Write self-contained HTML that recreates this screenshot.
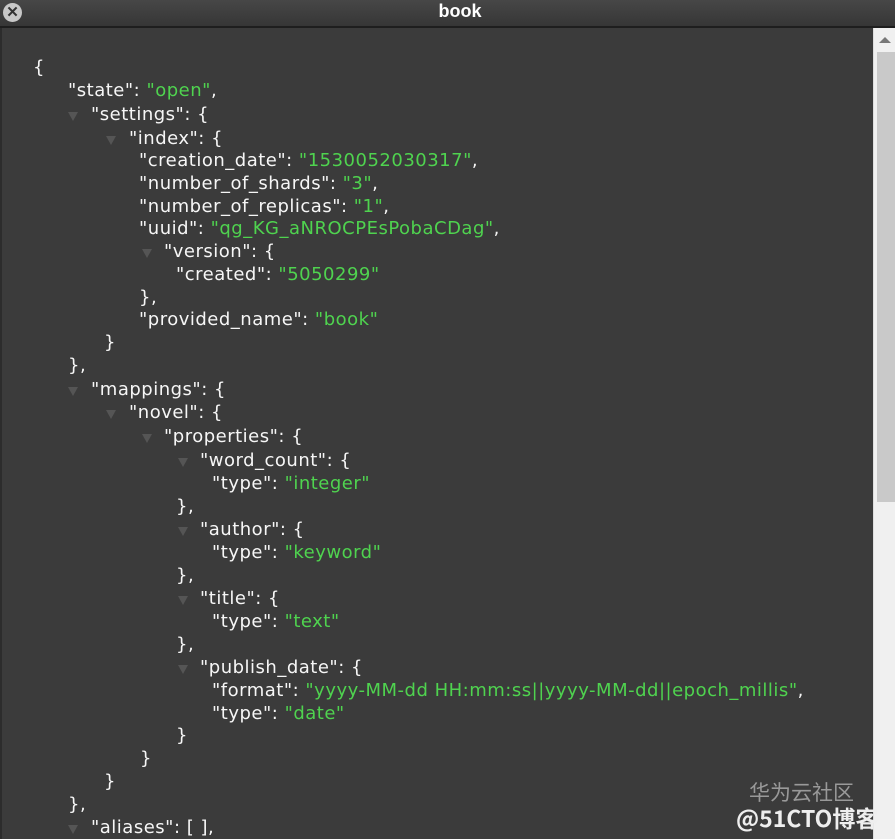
<!DOCTYPE html>
<html><head><meta charset="utf-8"><style>
body{margin:0;width:895px;height:839px;overflow:hidden;background:#3a3a3a;position:relative;font-family:"DejaVu Sans",Verdana,sans-serif}
.tb{position:absolute;left:0;top:0;width:895px;height:26px;background:linear-gradient(#474747,#363636);border-bottom:2px solid #1e1e1e}
.tt{position:absolute;left:0;width:920px;top:1px;text-align:center;color:#fff;font-weight:bold;font-size:18px;font-family:"Liberation Sans",sans-serif}
.cl{position:absolute;left:3px;top:3px;width:19px;height:19px;border-radius:50%;background:#c8c8c8;color:#333;font-size:15px;font-weight:bold;text-align:center;line-height:19px;font-family:"Liberation Sans",sans-serif}
.c{position:absolute;left:0;top:28px;width:873px;height:811px;background:#3b3b3b;border-left:2px solid #2c2c2c}
.l{position:absolute;color:#f6f6f6;font-size:18px;line-height:22px;white-space:pre;letter-spacing:0.5px}
.s{color:#4fd34f}
.t{position:absolute;width:0;height:0;border-left:5px solid transparent;border-right:5px solid transparent;border-top:9px solid #555}
.sb{position:absolute;left:873px;top:28px;width:22px;height:811px;background:#f0f0f0;border-left:1px solid #ddd}
.th{position:absolute;left:877px;top:52px;width:18px;height:450px;background:#c9c9c9}
.ar{position:absolute;left:879px;top:37px;width:0;height:0;border-left:6px solid transparent;border-right:6px solid transparent;border-bottom:6px solid #777}
.wm{position:absolute;color:#bbb;font-family:"Noto Sans CJK SC",sans-serif}
</style></head><body>
<div class="tb"><div class="cl">✕</div><div class="tt">book</div></div>
<div class="c"></div>
<div class="sb"></div><div class="th"></div><div class="ar"></div>

<div class="l" style="left:33px;top:57px">{</div>
<div class="l" style="left:68px;top:80px">"state": <span class="s">"open"</span>,</div>
<div class="t" style="left:68px;top:112px"></div><div class="l" style="left:91px;top:104px">"settings": {</div>
<div class="t" style="left:106px;top:136px"></div><div class="l" style="left:129px;top:128px">"index": {</div>
<div class="l" style="left:139px;top:150px">"creation_date": <span class="s">"1530052030317"</span>,</div>
<div class="l" style="left:139px;top:173px">"number_of_shards": <span class="s">"3"</span>,</div>
<div class="l" style="left:139px;top:196px">"number_of_replicas": <span class="s">"1"</span>,</div>
<div class="l" style="left:139px;top:218px">"uuid": <span class="s">"qg_KG_aNROCPEsPobaCDag"</span>,</div>
<div class="t" style="left:142px;top:249px"></div><div class="l" style="left:164px;top:241px">"version": {</div>
<div class="l" style="left:176px;top:264px">"created": <span class="s">"5050299"</span></div>
<div class="l" style="left:139px;top:287px">},</div>
<div class="l" style="left:139px;top:309px">"provided_name": <span class="s">"book"</span></div>
<div class="l" style="left:104px;top:332px">}</div>
<div class="l" style="left:68px;top:355px">},</div>
<div class="t" style="left:68px;top:387px"></div><div class="l" style="left:91px;top:379px">"mappings": {</div>
<div class="t" style="left:106px;top:410px"></div><div class="l" style="left:129px;top:402px">"novel": {</div>
<div class="t" style="left:142px;top:434px"></div><div class="l" style="left:164px;top:426px">"properties": {</div>
<div class="t" style="left:178px;top:458px"></div><div class="l" style="left:200px;top:450px">"word_count": {</div>
<div class="l" style="left:212px;top:473px">"type": <span class="s">"integer"</span></div>
<div class="l" style="left:176px;top:496px">},</div>
<div class="t" style="left:178px;top:527px"></div><div class="l" style="left:200px;top:519px">"author": {</div>
<div class="l" style="left:212px;top:542px">"type": <span class="s">"keyword"</span></div>
<div class="l" style="left:176px;top:565px">},</div>
<div class="t" style="left:178px;top:596px"></div><div class="l" style="left:200px;top:588px">"title": {</div>
<div class="l" style="left:212px;top:611px">"type": <span class="s">"text"</span></div>
<div class="l" style="left:176px;top:634px">},</div>
<div class="t" style="left:178px;top:665px"></div><div class="l" style="left:200px;top:657px">"publish_date": {</div>
<div class="l" style="left:212px;top:680px">"format": <span class="s">"yyyy-MM-dd HH:mm:ss||yyyy-MM-dd||epoch_millis"</span>,</div>
<div class="l" style="left:212px;top:703px">"type": <span class="s">"date"</span></div>
<div class="l" style="left:176px;top:725px">}</div>
<div class="l" style="left:140px;top:748px">}</div>
<div class="l" style="left:104px;top:771px">}</div>
<div class="l" style="left:68px;top:794px">},</div>
<div class="t" style="left:68px;top:825px"></div><div class="l" style="left:91px;top:817px">"aliases": [ ],</div>

<div class="wm" style="left:749px;top:777px;font-size:21px;color:#999">华为云社区</div>
<div class="wm" style="left:736px;top:800px;font-size:23px;color:#eee;font-weight:bold">@51CTO博客</div>
</body></html>
